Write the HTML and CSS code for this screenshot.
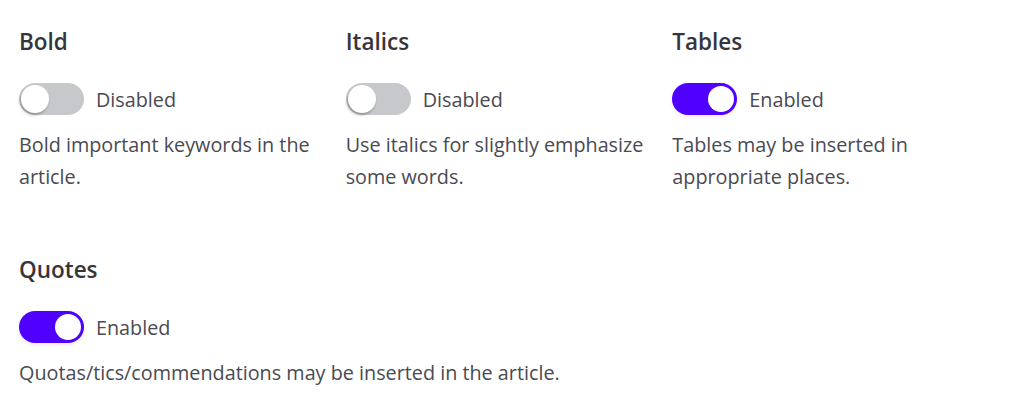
FILE: index.html
```html
<!DOCTYPE html>
<html lang="en">
<head>
<meta charset="utf-8">
<title>Article formatting settings</title>
<link rel="stylesheet" href="styles.css">
</head>
<body>
<div class="settings">
  <section class="setting">
    <h3 class="setting-title">Bold</h3>
    <label class="toggle-row">
      <span class="toggle"><span class="knob"></span></span>
      <span class="toggle-label">Disabled</span>
    </label>
    <p class="setting-desc">Bold important keywords in the article.</p>
  </section>
  <section class="setting">
    <h3 class="setting-title">Italics</h3>
    <label class="toggle-row">
      <span class="toggle"><span class="knob"></span></span>
      <span class="toggle-label">Disabled</span>
    </label>
    <p class="setting-desc">Use italics for slightly emphasize some words.</p>
  </section>
  <section class="setting">
    <h3 class="setting-title">Tables</h3>
    <label class="toggle-row">
      <span class="toggle on"><span class="knob"></span></span>
      <span class="toggle-label">Enabled</span>
    </label>
    <p class="setting-desc">Tables may be inserted in appropriate places.</p>
  </section>
  <section class="setting wide">
    <h3 class="setting-title">Quotes</h3>
    <label class="toggle-row">
      <span class="toggle on"><span class="knob"></span></span>
      <span class="toggle-label">Enabled</span>
    </label>
    <p class="setting-desc">Quotas/tics/commendations may be inserted in the article.</p>
  </section>
</div>
</body>
</html>
```
FILE: styles.css
```css
html, body {
  margin: 0;
  padding: 0;
  background: #ffffff;
}

body {
  font-family: "Open Sans", "Noto Sans", sans-serif;
  color: #4a4a52;
}

.settings {
  display: grid;
  grid-template-columns: repeat(3, 1fr);
  row-gap: 62px;
  padding: 27px 19px 0 19px;
}

.setting {
  display: flex;
  flex-direction: column;
  align-items: flex-start;
}

.setting.wide {
  grid-column: 1 / -1;
}

.setting-title {
  margin: 0;
  font-size: 22.5px;
  line-height: 30px;
  font-weight: 600;
  color: #35353b;
}

.toggle-row {
  display: flex;
  align-items: center;
  gap: 12px;
  margin-top: 25px;
}

.toggle {
  position: relative;
  display: block;
  width: 65px;
  height: 32px;
  border-radius: 16px;
  background: #c7c8cc;
}

.toggle.on {
  background: #5000ff;
  box-shadow: 0 2px 4px rgba(0, 0, 0, 0.08);
}

.knob {
  position: absolute;
  top: 2px;
  left: 2px;
  width: 28px;
  height: 28px;
  border-radius: 50%;
  background: #ffffff;
  box-shadow: -1px 2px 3px rgba(0, 0, 0, 0.28);
}

.toggle.on .knob {
  left: auto;
  right: 3px;
  top: 3px;
  width: 26px;
  height: 26px;
  box-shadow: none;
}

.toggle-label {
  font-size: 19.8px;
  line-height: 32px;
  color: #4a4a52;
  padding-top: 2px;
}

.setting-desc {
  margin: 13px 0 0 0;
  max-width: 310px;
  font-size: 19.8px;
  line-height: 32px;
  color: #4a4a52;
}

.setting.wide .setting-desc {
  max-width: none;
}
```
